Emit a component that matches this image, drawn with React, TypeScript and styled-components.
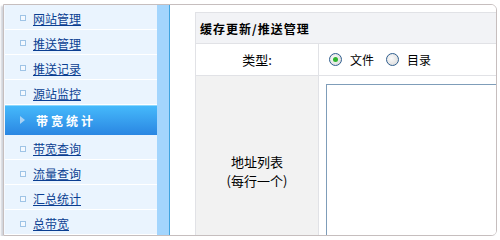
import styled, { createGlobalStyle } from "styled-components";

const GlobalStyle = createGlobalStyle`
  body {
    margin: 0;
    background: #fff;
    font-family: "Noto Sans CJK SC", "Liberation Sans", sans-serif;
    font-size: 12px;
  }
`;

export const Frame = styled.div`
  display: flex;
  margin: 4px 3px 0 3px;
  height: 232px;
  box-sizing: border-box;
  border: 1px solid #c6bebe;
  border-radius: 0 6px 6px 0;
  overflow: hidden;
  box-shadow: -2px 2px 2px rgba(120, 130, 150, 0.35);
`;

export const Sidebar = styled.div`
  display: flex;
  flex-direction: column;
  width: 153px;
  flex-shrink: 0;
  background: #eaf4fe;
  border-left: 1px solid #f4f9ff;
  box-sizing: border-box;
`;

export const MenuItem = styled.a`
  display: flex;
  align-items: center;
  gap: 4px;
  height: 25px;
  padding: 3px 0 0 15px;
  box-sizing: border-box;
  border-bottom: 1px solid #ffffff;
  color: #0b3f92;
  text-decoration: underline;
  font-size: 12px;
`;

export const Bullet = styled.span`
  width: 4px;
  height: 4px;
  border: 1px solid #9fc4e6;
  background: #f4f9ff;
  margin-right: 3px;
`;

export const ActiveItem = styled.div`
  display: flex;
  align-items: center;
  height: 31px;
  padding-left: 15px;
  box-sizing: border-box;
  border-top: 1px solid #8ad8ff;
  background: linear-gradient(#45b9fb, #2a86e2);
  color: #fff;
  font-weight: bold;
  font-size: 12px;
  letter-spacing: 3px;
`;

export const Arrow = styled.span`
  width: 0;
  height: 0;
  border-top: 4px solid transparent;
  border-bottom: 4px solid transparent;
  border-left: 5px solid #a9d2f4;
  margin-right: 11px;
`;

export const Strip = styled.div`
  width: 12px;
  flex-shrink: 0;
  background: #a3d5fd;
  border-right: 1px solid #3fa4e0;
`;

export const Main = styled.div`
  flex: 1;
  background: #fff;
  padding: 7px 0 0 25px;
  overflow: hidden;
`;

export const Grid = styled.div`
  display: grid;
  grid-template-columns: 123px 320px;
  grid-template-rows: 31px 32px 190px;
  border-left: 1px solid #e1e2e6;
  border-top: 1px solid #e1e2e6;
`;

export const Title = styled.div`
  grid-column: 1 / 3;
  display: flex;
  align-items: center;
  padding-left: 4px;
  background: #f2f3f6;
  border-bottom: 1px solid #e1e2e6;
  font-weight: bold;
  letter-spacing: 1px;
  color: #000;
`;

export const Label = styled.div<{ $shade?: boolean }>`
  display: flex;
  flex-direction: column;
  align-items: center;
  justify-content: center;
  line-height: 19px;
  font-size: 13px;
  background: ${(p) => (p.$shade ? "#f2f2f2" : "#fff")};
  border-right: 1px solid #e1e2e6;
  border-bottom: 1px solid #e1e2e6;
  color: #000;
`;

export const Value = styled.div`
  display: flex;
  align-items: center;
  padding-left: 10px;
  background: #fff;
  border-bottom: 1px solid #e1e2e6;
`;

export const AreaCell = styled.div`
  padding: 8px 0 0 7px;
  background: #fff;
`;

export const TextArea = styled.div`
  width: 320px;
  height: 170px;
  border: 1px solid #7f9db9;
  background: #fff;
`;

export const Radio = styled.span<{ $checked?: boolean }>`
  position: relative;
  width: 11px;
  height: 11px;
  border-radius: 50%;
  border: 1px solid #2f5e8e;
  background: radial-gradient(circle at 40% 40%, #fbfbfb, #d6d6d6);
  margin-right: 8px;
  &::after {
    content: "";
    display: ${(p) => (p.$checked ? "block" : "none")};
    position: absolute;
    left: 3px;
    top: 3px;
    width: 5px;
    height: 5px;
    border-radius: 50%;
    background: #2fb52f;
  }
`;

export const Option = styled.span`
  margin-right: 12px;
  color: #000;
`;

const before = ["网站管理", "推送管理", "推送记录", "源站监控"];
const after = ["带宽查询", "流量查询", "汇总统计", "总带宽"];

function App() {
  return (
    <>
      <GlobalStyle />
      <Frame>
        <Sidebar>
          {before.map((t) => (
            <MenuItem key={t}>
              <Bullet />
              {t}
            </MenuItem>
          ))}
          <ActiveItem>
            <Arrow />
            带宽统计
          </ActiveItem>
          {after.map((t) => (
            <MenuItem key={t}>
              <Bullet />
              {t}
            </MenuItem>
          ))}
        </Sidebar>
        <Strip />
        <Main>
          <Grid>
            <Title>缓存更新/推送管理</Title>
            <Label>类型:</Label>
            <Value>
              <Radio $checked />
              <Option>文件</Option>
              <Radio />
              <Option>目录</Option>
            </Value>
            <Label $shade>
              <span>地址列表</span>
              <span>(每行一个)</span>
            </Label>
            <AreaCell>
              <TextArea />
            </AreaCell>
          </Grid>
        </Main>
      </Frame>
    </>
  );
}

export default App;
